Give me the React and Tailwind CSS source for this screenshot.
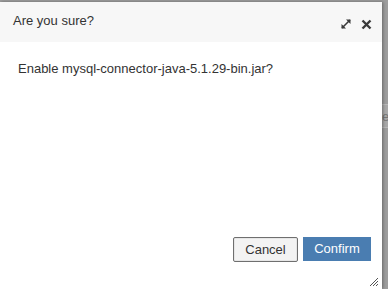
import React from "react";

export default function App() {
  return (
    <div className="w-[388px] h-[289px] bg-[#9d9d9d] overflow-hidden relative" style={{ fontFamily: '"Liberation Sans", Arial, sans-serif' }}>
      <div className="absolute right-0 top-[104px] w-[6px] h-[24px] border-y border-[#b8b8b8] bg-[#a8a8a8] text-[#777] text-[13px] leading-[24px] overflow-hidden">e</div>
      <div className="relative mt-[2px] w-[382px] h-[287px] bg-white flex flex-col shadow-[1px_0_3px_rgba(0,0,0,0.35)]">
        <div className="h-[40px] bg-[#f7f7f7] flex items-center pl-[13px] pr-[10px]">
          <div className="text-[13px] text-[#333] -mt-[2px]">Are you sure?</div>
          <div className="ml-auto flex items-center gap-[10px] mt-[4px]">
            <svg width="10" height="10" viewBox="0 0 10 10">
              <path d="M1 9 L9 1" stroke="#3a3a3a" strokeWidth="1.6" />
              <path d="M0.5 5 L0.5 9.5 L5 9.5 Z" fill="#3a3a3a" />
              <path d="M5 0.5 L9.5 0.5 L9.5 5 Z" fill="#3a3a3a" />
            </svg>
            <svg width="11" height="11" viewBox="0 0 11 11">
              <path d="M1.5 1.5 L9.5 9.5 M9.5 1.5 L1.5 9.5" stroke="#3a3a3a" strokeWidth="2.4" strokeLinecap="butt" />
            </svg>
          </div>
        </div>
        <div className="flex-1 flex flex-col px-[18px]">
          <div className="pt-[19px] text-[13px] text-[#333] leading-[16px]">Enable mysql-connector-java-5.1.29-bin.jar?</div>
          <div className="mt-auto mb-[27px] flex justify-end gap-[5px] mr-[-7px]">
            <button className="h-[25px] w-[65px] border border-[#6f6f6f] rounded-[2px] bg-[#f3f3f3] text-[13px] text-[#333] shadow-[inset_0_0_0_1px_#e6e6e6]">Cancel</button>
            <button className="h-[24px] w-[68px] bg-[#4a7db1] text-[13px] text-white">Confirm</button>
          </div>
        </div>
        <svg className="absolute right-[3px] bottom-[2px]" width="10" height="10" viewBox="0 0 10 10">
          <path d="M1 9 L9 1 M4 9 L9 4 M7 9 L9 7" stroke="#555" strokeWidth="1" />
        </svg>
      </div>
    </div>
  );
}
